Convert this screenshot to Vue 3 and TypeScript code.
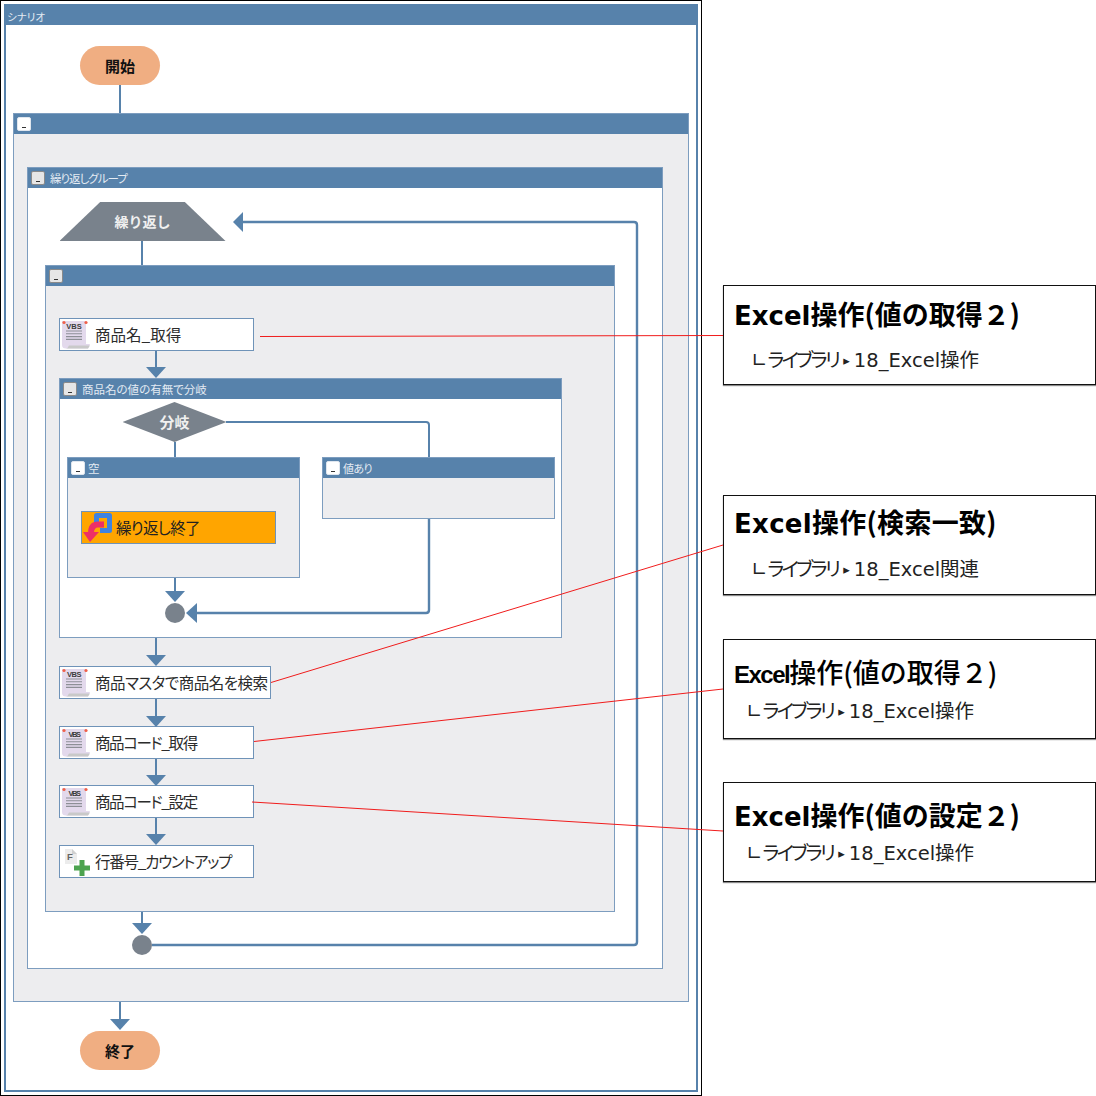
<script setup lang="ts">
interface Callout {
  title: string
  sub: string
  narrow: boolean
  cls: string
}

const callouts: Callout[] = [
  { title: '操作(値の取得２)', sub: '18_Excel操作', narrow: false, cls: 'c1' },
  { title: '操作(検索一致)', sub: '18_Excel関連', narrow: false, cls: 'c2' },
  { title: '操作(値の取得２)', sub: '18_Excel操作', narrow: true, cls: 'c3' },
  { title: '操作(値の設定２)', sub: '18_Excel操作', narrow: false, cls: 'c4' },
]

const arrowsDown: [number, number][] = [
  [156, 367], [175, 591], [156, 655], [156, 716], [156, 775], [156, 834], [142, 923], [120, 1019],
]

const stems: [number, number, number][] = [
  [120, 85, 113], [142, 241, 265], [156, 351, 368], [175, 442, 457], [175, 578, 592],
  [156, 638, 656], [156, 699, 717], [156, 759, 776], [156, 818, 835], [142, 912, 924], [120, 1002, 1020],
]

function tri(x: number, y: number): string {
  return `${x - 10},${y} ${x + 10},${y} ${x},${y + 11}`
}
</script>

<template>
  <div class="page">
    <svg class="defs" width="0" height="0" aria-hidden="true">
      <symbol id="vbs" viewBox="0 0 30 30">
        <path d="M0 1H24V24H28L26 28.5H4Q0 28.5 0 25Z" fill="#e3d9ec" />
        <path d="M7 25.5H28L26 28.5H4Q6 28 7 25.5Z" fill="#c9c9c9" />
        <circle cx="2" cy="2.5" r="1.6" fill="#f0604a" />
        <circle cx="24" cy="2.5" r="1.6" fill="#f0604a" />
        <text x="12" y="8.8" text-anchor="middle" font-family="'Liberation Sans', sans-serif" font-size="7.5" font-weight="700" fill="#3c3c3c">VBS</text>
        <path d="M4 11H20M4 13.8H20M4 16.6H20M4 19.4H20" stroke="#8d8f96" stroke-width="1.1" fill="none" />
      </symbol>
    </svg>

    <div class="frame">
      <section class="scenario">
        <header class="scenario-head">シナリオ</header>
        <div class="scenario-body">
          <div class="pill start">開始</div>

          <section class="group g1">
            <header class="head"><span class="btn light"><i></i></span></header>
            <div class="body gray">
              <section class="group g2">
                <header class="head"><span class="btn"><i></i></span><span class="label l-loop">繰り返しグループ</span></header>
                <div class="body">
                  <div class="trapezoid">繰り返し</div>

                  <section class="group g3">
                    <header class="head"><span class="btn"><i></i></span></header>
                    <div class="body gray">
                      <div class="node n1">
                        <svg class="ico" viewBox="0 0 30 30"><use href="#vbs" /></svg>
                        <span>商品名_取得</span>
                      </div>

                      <section class="group g4">
                        <header class="head"><span class="btn"><i></i></span><span class="label">商品名の値の有無で分岐</span></header>
                        <div class="body">
                          <div class="diamond">分岐</div>
                          <div class="branches">
                            <section class="group g5">
                              <header class="head tight"><span class="btn light"><i></i></span><span class="label">空</span></header>
                              <div class="body gray">
                                <div class="node orange">
                                  <svg class="ico" viewBox="0 0 30 30">
                                    <path d="M13.5 10V2.5H26.5V17.5H17" fill="none" stroke="#3f83e0" stroke-width="5" stroke-linejoin="round" />
                                    <path d="M21 11.5H15Q8 11.5 8 20" fill="none" stroke="#ee2f66" stroke-width="6" />
                                    <path d="M0 19H16L7 29Z" fill="#ee2f66" />
                                  </svg>
                                  <span>繰り返し終了</span>
                                </div>
                              </div>
                            </section>
                            <section class="group g6">
                              <header class="head tight"><span class="btn light"><i></i></span><span class="label l-val">値あり</span></header>
                              <div class="body gray"></div>
                            </section>
                          </div>
                          <div class="dot d1"></div>
                        </div>
                      </section>

                      <div class="node n2">
                        <svg class="ico" viewBox="0 0 30 30"><use href="#vbs" /></svg>
                        <span>商品マスタで商品名を検索</span>
                      </div>
                      <div class="node n3">
                        <svg class="ico" viewBox="0 0 30 30"><use href="#vbs" /></svg>
                        <span>商品コード_取得</span>
                      </div>
                      <div class="node n4">
                        <svg class="ico" viewBox="0 0 30 30"><use href="#vbs" /></svg>
                        <span>商品コード_設定</span>
                      </div>
                      <div class="node n5">
                        <svg class="ico" viewBox="0 0 30 30">
                          <path d="M3 2H10L15 7V17H3Z" fill="#ececec" />
                          <path d="M10 2L15 7H10Z" fill="#d0d0d0" />
                          <text x="5" y="12.5" font-family="'Liberation Sans', sans-serif" font-size="9.5" font-weight="700" fill="#666">F</text>
                          <path d="M12 21H28M20 13V29" stroke="#4ca34f" stroke-width="5" />
                        </svg>
                        <span>行番号_カウントアップ</span>
                      </div>
                    </div>
                  </section>

                  <div class="dot d2"></div>
                </div>
              </section>
            </div>
          </section>

          <div class="pill end">終了</div>
        </div>
      </section>
    </div>

    <aside class="notes">
      <article v-for="c in callouts" :key="c.cls" class="note" :class="c.cls">
        <h2 class="note-title" :class="{ narrow: c.narrow }"><span class="latin">Excel</span>{{ c.title }}</h2>
        <p class="note-sub">∟<span class="kana">ライブラリ</span><span class="caret">▸</span>{{ c.sub }}</p>
      </article>
    </aside>

    <svg class="wires" width="1096" height="1096" viewBox="0 0 1096 1096" aria-hidden="true">
      <g fill="none" stroke="#5782ab" stroke-width="2">
        <path v-for="(s, i) in stems" :key="i" :d="`M${s[0]} ${s[1]}V${s[2]}`" />
        <path d="M152 945H634Q637 945 637 942V225Q637 222 634 222H242" stroke-width="2.4" />
        <path d="M226 422H426Q429 422 429 425V457" />
        <path d="M429 519V610Q429 613 426 613H196" stroke-width="2.4" />
      </g>
      <g fill="#5782ab">
        <polygon v-for="(a, i) in arrowsDown" :key="i" :points="tri(a[0], a[1])" />
        <polygon points="233,222 243,212 243,232" />
        <polygon points="186,613 197,603 197,623" />
      </g>
      <g stroke="#f01c1c" stroke-width="1" fill="none">
        <path d="M260 336.5L723 335.5" />
        <path d="M271 682.5L723 545" />
        <path d="M254 741.5L723 689" />
        <path d="M252 802L723 831" />
      </g>
    </svg>
  </div>
</template>

<style scoped>
.page {
  position: relative;
  display: flex;
  width: 1096px;
  height: 1096px;
  overflow: hidden;
  background: #fff;
  font-family: "Noto Sans CJK JP", sans-serif;
  color: #222;
}
.defs {
  display: none;
}
.wires {
  position: absolute;
  inset: 0;
  pointer-events: none;
}
.frame {
  box-sizing: border-box;
  flex: none;
  width: 702px;
  height: 1096px;
  padding: 3px;
  border: 1px solid #000;
}
.scenario {
  box-sizing: border-box;
  width: 694px;
  height: 1088px;
  border: 2px solid #5782ab;
  border-top-width: 1px;
}
.scenario-head {
  display: flex;
  align-items: center;
  box-sizing: border-box;
  height: 20px;
  padding: 2px 0 0 1px;
  background: #5782ab;
  color: #e4ebf3;
  font-size: 10.5px;
  font-feature-settings: "palt";
  overflow: visible;
}
.scenario-body {
  display: flex;
  flex-direction: column;
  align-items: flex-start;
}
.pill {
  display: flex;
  align-items: center;
  justify-content: center;
  width: 80px;
  height: 39px;
  border-radius: 20px;
  background: #f0ae82;
  color: #111;
  font-size: 15px;
  font-weight: 700;
}
.start {
  margin: 21px 0 0 74px;
}
.end {
  margin: 29px 0 0 74px;
}
.group {
  box-sizing: border-box;
  display: flex;
  flex-direction: column;
  border: 1px solid #7d9dbf;
}
.head {
  flex: none;
  display: flex;
  align-items: center;
  gap: 5px;
  height: 20px;
  padding-left: 3px;
  background: #5782ab;
}
.head.tight {
  gap: 3px;
}
.label {
  color: #e4ebf3;
  font-size: 11.5px;
  font-feature-settings: "palt";
  white-space: nowrap;
}
.l-loop {
  letter-spacing: -1px;
}
.l-val {
  font-size: 11px;
  letter-spacing: -0.6px;
}
.btn {
  box-sizing: border-box;
  display: flex;
  align-items: flex-end;
  justify-content: center;
  flex: none;
  width: 14px;
  height: 14px;
  padding-bottom: 2px;
  border: 1px solid #8a8a8a;
  border-radius: 2px;
  background: #e6e6e6;
}
.btn.light {
  border-color: #dfe6ee;
  background: #fff;
}
.btn i {
  display: block;
  width: 4px;
  height: 1px;
  background: #333;
}
.body {
  flex: 1;
  display: flex;
  flex-direction: column;
  align-items: flex-start;
  background: #fff;
}
.body.gray {
  background: #ededef;
}
.g1 {
  width: 676px;
  height: 889px;
  margin: 28px 0 0 7px;
}
.g2 {
  width: 636px;
  height: 802px;
  margin: 33px 0 0 13px;
}
.g3 {
  width: 570px;
  height: 647px;
  margin: 24px 0 0 17px;
}
.g4 {
  width: 503px;
  height: 260px;
  margin: 27px 0 0 13px;
}
.g5 {
  width: 233px;
  height: 121px;
}
.g6 {
  width: 233px;
  height: 62px;
}
.trapezoid {
  display: flex;
  align-items: center;
  justify-content: center;
  box-sizing: border-box;
  width: 166px;
  height: 39px;
  margin: 14px 0 0 31.5px;
  padding-bottom: 2px;
  background: #79828c;
  clip-path: polygon(24.5% 0, 75.5% 0, 100% 100%, 0 100%);
  color: #f0f0f0;
  font-size: 14px;
  font-weight: 700;
}
.diamond {
  display: flex;
  align-items: center;
  justify-content: center;
  box-sizing: border-box;
  width: 104px;
  height: 40px;
  margin: 3px 0 0 62.5px;
  padding-bottom: 2px;
  background: #79828c;
  clip-path: polygon(50% 0, 100% 50%, 50% 100%, 0 50%);
  color: #f0f0f0;
  font-size: 15px;
  font-weight: 700;
}
.branches {
  display: flex;
  align-items: flex-start;
  gap: 22px;
  margin: 15px 0 0 7px;
}
.dot {
  width: 20px;
  height: 20px;
  border-radius: 50%;
  background: #79828c;
}
.d1 {
  margin: 25px 0 0 105px;
}
.d2 {
  margin: 23px 0 0 104px;
}
.node {
  box-sizing: border-box;
  display: flex;
  align-items: center;
  flex: none;
  width: 195px;
  height: 33px;
  padding-left: 2px;
  border: 1px solid #6f93b8;
  background: #fff;
  color: #2c2c2c;
  font-size: 15.5px;
  line-height: 28px;
  font-feature-settings: "palt";
  white-space: nowrap;
}
.node span {
  margin-bottom: 2px;
}
.ico {
  flex: none;
  width: 30px;
  height: 30px;
  margin-right: 3px;
}
.n1 {
  margin: 32px 0 0 13px;
}
.n2 {
  width: 212px;
  margin: 28px 0 0 13px;
  letter-spacing: -0.5px;
}
.n3 {
  margin: 27px 0 0 13px;
  letter-spacing: -1.4px;
}
.n4 {
  margin: 26px 0 0 13px;
  letter-spacing: -1.4px;
}
.n5 {
  margin: 27px 0 0 13px;
  letter-spacing: -1.27px;
}
.orange {
  margin: 33px 0 0 13px;
  padding-left: 1px;
  background: #ffa500;
  color: #222;
  letter-spacing: -0.7px;
}
.notes {
  display: flex;
  flex-direction: column;
  flex: none;
  padding: 285px 0 0 21px;
}
.note {
  box-sizing: border-box;
  display: flex;
  flex-direction: column;
  width: 373px;
  height: 100px;
  padding-left: 10px;
  border: 1px solid #111;
  box-shadow: 0 1px 1px #8a8a8a;
}
.c2 {
  margin-top: 110px;
}
.c3 {
  margin-top: 44px;
}
.c4 {
  margin-top: 43px;
}
.note-title {
  flex: none;
  margin: 0;
  height: 40px;
  padding-top: 8px;
  color: #000;
  font-size: 27px;
  line-height: 40px;
  font-weight: 700;
  white-space: nowrap;
  font-family: "Noto Sans CJK JP", sans-serif;
}
.latin {
  font-family: "DejaVu Sans", sans-serif;
  font-size: 26px;
}
.c2 .note-title {
  padding-top: 6px;
  letter-spacing: 0.3px;
}
.c3 .note-title {
  padding-top: 12px;
  font-size: 27px;
  font-weight: 500;
}
.c4 .note-title {
  padding-top: 12px;
}
.narrow .latin {
  font-family: "Liberation Sans", sans-serif;
  font-size: 24px;
  font-weight: 700;
  letter-spacing: -1.5px;
}
.note-sub {
  margin: 12px 0 0;
  padding: 0 0 0 17px;
  color: #222;
  font-family: "DejaVu Sans", "Noto Sans CJK JP", sans-serif;
  font-size: 19.5px;
  line-height: 30px;
  font-feature-settings: "palt";
  white-space: nowrap;
}
.kana {
  letter-spacing: -2.6px;
}
.c2 .note-sub {
  margin-top: 13px;
}
.c3 .note-sub,
.c4 .note-sub {
  padding-left: 12px;
}
.c3 .note-sub {
  margin-top: 5px;
}
.c4 .note-sub {
  margin-top: 4px;
}
.caret {
  margin: 0 4px 0 5px;
  font-size: 13px;
  vertical-align: 2px;
}
</style>
